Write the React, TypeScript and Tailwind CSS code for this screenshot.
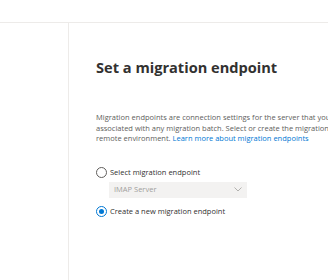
export default function App() {
  return (
    <div className="w-[328px] h-[280px] overflow-hidden bg-white" style={{ fontFamily: '"Open Sans", "Noto Sans", sans-serif' }}>
      <div className="h-[23px] border-b border-[#edebe9]" />
      <div className="flex h-[257px]">
        <div className="w-[69px] shrink-0 border-r border-[#edebe9]" />
        <div className="pl-[27px] pt-[32px] whitespace-nowrap">
          <h1 className="text-[14.6px] leading-[24px] font-bold text-[#323130]">Set a migration endpoint</h1>
          <p className="mt-[33px] text-[7.5px] leading-[10.5px] text-[#605e5c]">
            Migration endpoints are connection settings for the server that you use to
            <br />
            associated with any migration batch. Select or create the migration endpoint
            <br />
            remote environment. <span className="text-[#0078d4]">Learn more about migration endpoints</span>
          </p>
          <div className="mt-[23px] flex flex-col">
            <label className="flex items-center gap-[3px] text-[7.5px] text-[#323130]">
              <span className="w-[11px] h-[11px] rounded-full border border-[#605e5c] bg-white" />
              Select migration endpoint
            </label>
            <div className="ml-[13px] mt-[4px] w-[138px] h-[16px] bg-[#f3f2f1] flex items-center justify-between px-[5px] text-[7.5px] text-[#a19f9d]">
              <span>IMAP Server</span>
              <svg width="8" height="5" viewBox="0 0 8 5" fill="none">
                <path d="M0.5 0.5L4 4L7.5 0.5" stroke="#a19f9d" strokeWidth="0.8" />
              </svg>
            </div>
            <label className="mt-[8px] flex items-center gap-[3px] text-[7.5px] text-[#323130]">
              <span className="w-[11px] h-[11px] rounded-full border border-[#0078d4] bg-white flex items-center justify-center">
                <span className="w-[5px] h-[5px] rounded-full bg-[#0078d4]" />
              </span>
              Create a new migration endpoint
            </label>
          </div>
        </div>
      </div>
    </div>
  );
}
